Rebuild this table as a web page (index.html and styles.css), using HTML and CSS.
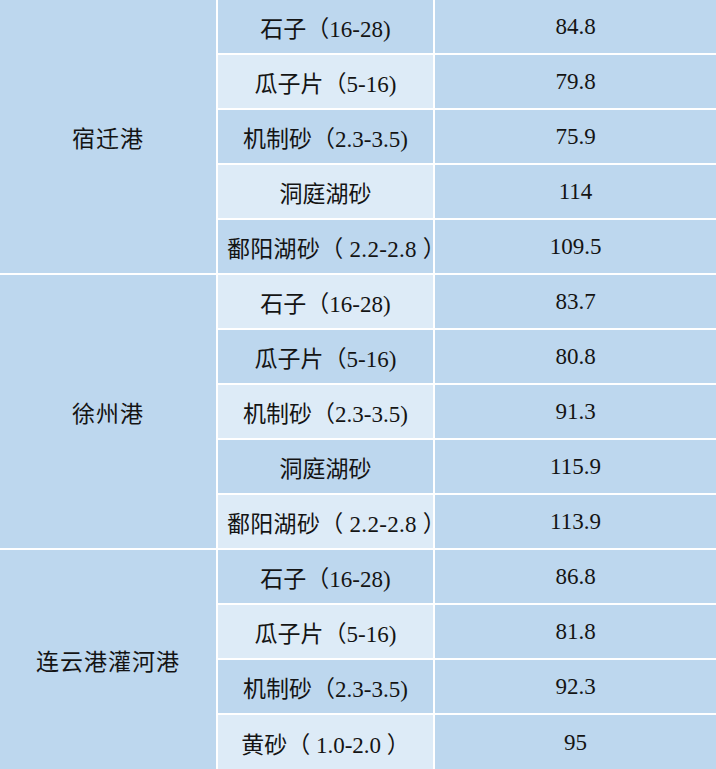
FILE: index.html
```html
<!DOCTYPE html>
<html lang="zh-CN">
<head>
<meta charset="utf-8">
<link rel="stylesheet" href="styles.css">
</head>
<body>
<table class="price-table">
  <colgroup><col class="c-port"><col class="c-item"><col class="c-price"></colgroup>
  <tbody>
    <tr class="odd"><td class="port" rowspan="5">宿迁港</td><td class="item">石子（16-28)</td><td class="price">84.8</td></tr>
    <tr class="even"><td class="item">瓜子片（5-16)</td><td class="price">79.8</td></tr>
    <tr class="odd"><td class="item">机制砂（2.3-3.5)</td><td class="price">75.9</td></tr>
    <tr class="even"><td class="item">洞庭湖砂</td><td class="price">114</td></tr>
    <tr class="odd"><td class="item wide">鄱阳湖砂（ 2.2-2.8 ）</td><td class="price">109.5</td></tr>
    <tr class="even"><td class="port" rowspan="5">徐州港</td><td class="item">石子（16-28)</td><td class="price">83.7</td></tr>
    <tr class="odd"><td class="item">瓜子片（5-16)</td><td class="price">80.8</td></tr>
    <tr class="even"><td class="item">机制砂（2.3-3.5)</td><td class="price">91.3</td></tr>
    <tr class="odd"><td class="item">洞庭湖砂</td><td class="price">115.9</td></tr>
    <tr class="even"><td class="item wide">鄱阳湖砂（ 2.2-2.8 ）</td><td class="price">113.9</td></tr>
    <tr class="odd"><td class="port" rowspan="4">连云港灌河港</td><td class="item">石子（16-28)</td><td class="price">86.8</td></tr>
    <tr class="even"><td class="item">瓜子片（5-16)</td><td class="price">81.8</td></tr>
    <tr class="odd"><td class="item">机制砂（2.3-3.5)</td><td class="price">92.3</td></tr>
    <tr class="even last"><td class="item">黄砂（ 1.0-2.0 ）</td><td class="price">95</td></tr>
  </tbody>
</table>
</body>
</html>
```
FILE: styles.css
```css
html, body {
  margin: 0;
  padding: 0;
  background: #ffffff;
  overflow: hidden;
}

.price-table {
  border-collapse: separate;
  border-spacing: 0;
  table-layout: fixed;
  width: 716px;
  font-family: "Liberation Serif", "Noto Sans CJK SC", serif;
  font-size: 23px;
  color: #141414;
  border-right: 3px solid #c9d4de;
}

.c-port { width: 216px; }
.c-item { width: 219px; }
.c-price { width: 281px; }

.price-table td {
  height: 53px;
  padding: 0;
  text-align: center;
  vertical-align: middle;
  border-bottom: 2px solid #ffffff;
  background: #bdd7ee;
  white-space: nowrap;
}

.price-table tr.last td { height: 56px; border-bottom: 0; }

.port {
  letter-spacing: 1px;
}

.item {
  border-left: 2px solid #ffffff;
  border-right: 2px solid #ffffff;
}

.item.wide {
  padding-left: 9px;
  letter-spacing: 0.3px;
}

tr.even .item { background: #ddebf7; }
```
